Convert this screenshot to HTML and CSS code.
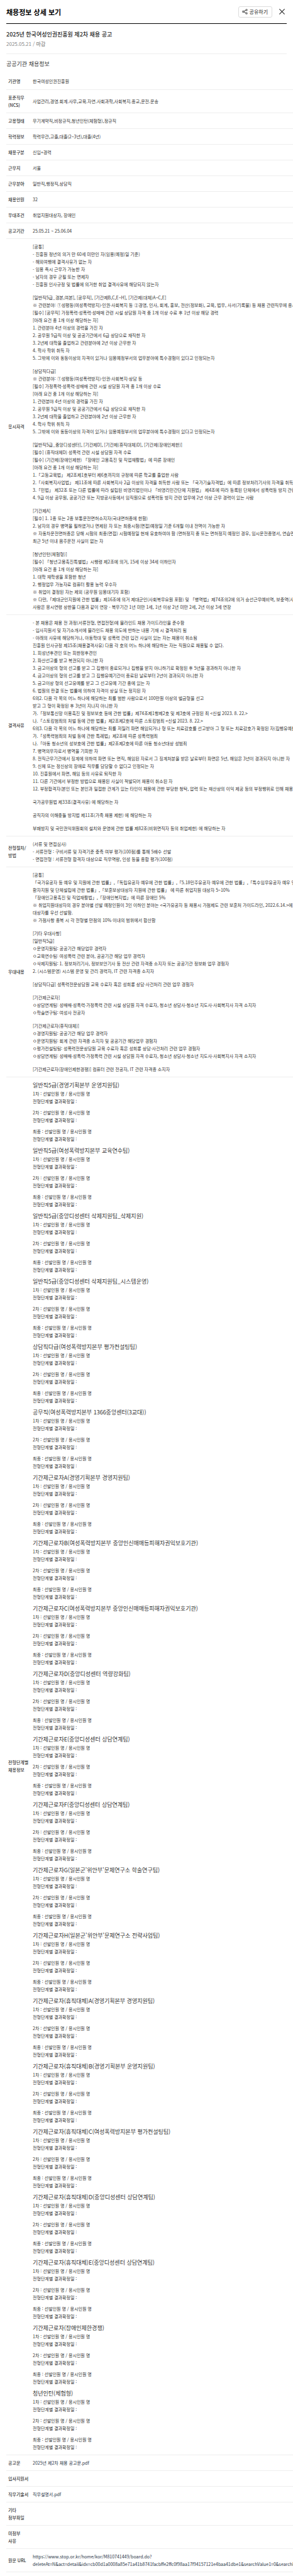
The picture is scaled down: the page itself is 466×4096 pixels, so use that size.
FILE: index.html
```html
<!DOCTYPE html>
<html lang="ko">
<head>
    <meta charset="UTF-8">
    <meta name="viewport" content="width=device-width, initial-scale=1.0">
    <title>채용정보 상세 보기</title>
    <link rel="stylesheet" href="styles.css">
</head>
<body>

    <header class="popup-header">
        <h1>채용정보 상세 보기</h1>
        <div class="popup-actions">
            <button type="button" class="btn-share">
                <svg viewBox="0 0 14 14" width="9" height="9" fill="none" stroke="#555" stroke-width="1.6">
                    <circle cx="2.8" cy="7" r="1.8"/>
                    <circle cx="11" cy="2.8" r="1.8"/>
                    <circle cx="11" cy="11.2" r="1.8"/>
                    <path d="M4.6 6.1l4.8-2.5M4.6 7.9l4.8 2.5"/>
                </svg>
                공유하기
            </button>
            <button type="button" class="btn-close" aria-label="닫기">
                <svg viewBox="0 0 14 14" width="9" height="9" fill="none" stroke="#222" stroke-width="1.6">
                    <path d="M0.5 0.5l13 13M13.5 0.5l-13 13"/>
                </svg>
            </button>
        </div>
    </header>

    <main class="popup-body">
        <div class="notice-title">
            <h2>2025년 한국여성인권진흥원 제2차 채용 공고</h2>
            <p>2025.05.21 / <strong>마감</strong></p>
        </div>

        <h3 class="section-title">공공기관 채용정보</h3>

        <div class="table-wrap">
        <table class="info-table">
            <tbody>
                <tr>
                    <th scope="row">기관명</th>
                    <td>한국여성인권진흥원</td>
                </tr>
                <tr>
                    <th scope="row">표준직무<br>(NCS)</th>
                    <td>사업관리,경영.회계.사무,교육.자연.사회과학,사회복지.종교,운전.운송</td>
                </tr>
                <tr>
                    <th scope="row">고용형태</th>
                    <td>무기계약직,비정규직,청년인턴(체험형),정규직</td>
                </tr>
                <tr>
                    <th scope="row">학력정보</th>
                    <td>학력무관,고졸,대졸(2~3년),대졸(4년)</td>
                </tr>
                <tr>
                    <th scope="row">채용구분</th>
                    <td>신입+경력</td>
                </tr>
                <tr>
                    <th scope="row">근무지</th>
                    <td>서울</td>
                </tr>
                <tr>
                    <th scope="row">근무분야</th>
                    <td>일반직,행정직,상담직</td>
                </tr>
                <tr>
                    <th scope="row">채용인원</th>
                    <td>32</td>
                </tr>
                <tr>
                    <th scope="row">우대조건</th>
                    <td>취업지원대상자, 장애인</td>
                </tr>
                <tr>
                    <th scope="row">공고기간</th>
                    <td>25.05.21 ~ 25.06.04</td>
                </tr>
                <tr>
                    <th scope="row">응시자격</th>
                    <td>
                        <p>[공통]<br>
                        - 진흥원 정년의 의거 만 60세 미만인 자(임용(예정)일 기준)<br>
                        - 해외여행에 결격사유가 없는 자<br>
                        - 임용 즉시 근무가 가능한 자<br>
                        - 남자의 경우 군필 또는 면제자<br>
                        - 진흥원 인사규정 및 법률에 의거한 취업 결격사유에 해당되지 않는자</p>
                        <p>[일반직5급_경본,여본], [공무직], [기간제B,C,E~H], [기간제(대체)A~C,E]<br>
                        ※ 관련분야: ①성평등(여성폭력방지)·인권·사회복지 등 ②경영, 인사, 회계, 홍보, 전산(정보화), 교육, 법무, 사서(기록물) 등 채용 관련직무에 종사한<br>
                        [필수] [공무직] 가정폭력·성폭력·성매매 관련 시설 상담원 자격 중 1개 이상 수료 후 1년 이상 해당 경력<br>
                        [아래 요건 중 1개 이상 해당하는 자]<br>
                        1. 관련분야 4년 이상의 경력을 가진 자<br>
                        2. 공무원 9급직 이상 및 공공기관에서 6급 상당으로 재직한 자<br>
                        3. 2년제 대학을 졸업하고 관련분야에 2년 이상 근무한 자<br>
                        4. 학사 학위 취득 자<br>
                        5. 그밖에 이와 동등이상의 자격이 있거나 임용예정부서의 업무분야에 특수경험이 있다고 인정되는자</p>
                        <p>[상담직다급]<br>
                        ※ 관련분야: ①성평등(여성폭력방지)·인권·사회복지·상담 등<br>
                        [필수] 가정폭력·성폭력·성매매 관련 시설 상담원 자격 중 1개 이상 수료<br>
                        [아래 요건 중 1개 이상 해당하는 자]<br>
                        1. 관련분야 4년 이상의 경력을 가진 자<br>
                        2. 공무원 9급직 이상 및 공공기관에서 6급 상당으로 재직한 자<br>
                        3. 2년제 대학을 졸업하고 관련분야에 2년 이상 근무한 자<br>
                        4. 학사 학위 취득 자<br>
                        5. 그밖에 이와 동등이상의 자격이 있거나 임용예정부서의 업무분야에 특수경험이 있다고 인정되는자</p>
                        <p>[일반직5급_중앙디성센터], [기간제D], [기간제(휴직대체)D], [기간제(장애인제한)]<br>
                        [필수] (휴직대체D) 성폭력 관련 시설 상담원 자격 수료<br>
                        [필수] (기간제(장애인제한) 「장애인 고용촉진 및 직업재활법」에 따른 장애인<br>
                        [아래 요건 중 1개 이상 해당하는 자]<br>
                        1.「고등교육법」 제2조제1호부터 제6호까지의 규정에 따른 학교를 졸업한 사람<br>
                        2.「사회복지사업법」 제11조에 따른 사회복지사 2급 이상의 자격을 취득한 사람 또는 「국가기술자격법」에 따른 정보처리기사의 자격을 취득한<br>
                        3.「민법」 제32조 또는 다른 법률에 따라 설립된 비영리법인이나 「비영리민간단체 지원법」 제4조에 따라 등록된 단체에서 성폭력등 방지 관련 업<br>
                        4. 9급 이상 공무원, 공공기관 또는 지방공사등에서 임직원으로 성폭력등 방지 관련 업무에 2년 이상 근무 경력이 있는 사람</p>
                        <p>[기간제A]<br>
                        [필수] 1. 1종 또는 2종 보통운전면허소지자(국내면허증에 한함)<br>
                        2. 남자의 경우 병역을 필하였거나 면제된 자 또는 최종시험(면접)예정일 기준 6개월 이내 전역이 가능한 자<br>
                        ※ 자동차운전면허증은 당해 시험의 최종(면접) 시험예정일 현재 유효하여야 함 (면허정지 중 또는 면허정지 예정인 경우, 임시운전증명서, 연습면허,<br>
                        최근 5년 이내 음주운전 사실이 없는 자</p>
                        <p>[청년인턴(체험형)]<br>
                        [필수] 「청년고용촉진특별법」시행령 제2조에 의거, 15세 이상 34세 이하인자<br>
                        [아래 요건 중 1개 이상 해당하는 자]<br>
                        1. 대학 재학생을 포함한 청년<br>
                        2. 행정업무 가능자로 컴퓨터 활용 능력 우수자<br>
                        ※ 취업이 결정된 자는 제외 (공무원 임용대기자 포함)<br>
                        ※ 다만,「제대군인지원에 관한 법률」제16조에 의거 제대군인(사회복무요원 포함) 및 「병역법」제74조의2에 의거 승선근무예비역, 보충역(사회<br>
                        사람은 응시연령 상한을 다음과 같이 연장 - 복무기간 1년 미만 1세, 1년 이상 2년 미만 2세, 2년 이상 3세 연장</p>
                    </td>
                </tr>
                <tr>
                    <th scope="row">결격사유</th>
                    <td>
                        <p>- 본 채용은 채용 전 과정(서류전형, 면접전형)에 블라인드 채용 가이드라인을 준수함<br>
                        - 입사지원서 및 자기소개서에 블라인드 채용 의도에 반하는 내용 기재 시 결격처리 됨<br>
                        - 아래의 사유에 해당하거나, 아동학대 및 성폭력 관련 입건 사실이 있는 자는 채용이 취소됨<br>
                        진흥원 인사규정 제15조(채용결격사유) 다음 각 호의 어느 하나에 해당하는 자는 직원으로 채용될 수 없다.<br>
                        1. 피성년후견인 또는 피한정후견인<br>
                        2. 파산선고를 받고 복권되지 아니한 자<br>
                        3. 금고이상의 형의 선고를 받고 그 집행이 종료되거나 집행을 받지 아니하기로 확정된 후 5년을 경과하지 아니한 자<br>
                        4. 금고이상의 형의 선고를 받고 그 집행유예기간이 종료된 날로부터 2년이 경과되지 아니한 자<br>
                        5. 금고이상 형의 선고유예를 받고 그 선고유예 기간 중에 있는 자<br>
                        6. 법원의 판결 또는 법률에 의하여 자격이 상실 또는 정지된 자<br>
                        6의2. 다음 각 목의 어느 하나에 해당하는 죄를 범한 사람으로서 100만원 이상의 벌금형을 선고<br>
                        받고 그 형이 확정된 후 3년이 지나지 아니한 자<br>
                        가.「정보통신망 이용촉진 및 정보보호 등에 관한 법률」제74조제1항제2호 및 제3호에 규정된 죄 &lt;신설 2023. 8. 22.&gt;<br>
                        나.「스토킹범죄의 처벌 등에 관한 법률」제2조제2호에 따른 스토킹범죄 &lt;신설 2023. 8. 22.&gt;<br>
                        6의3. 다음 각 목의 어느 하나에 해당하는 죄를 저질러 파면 해임되거나 형 또는 치료감호를 선고받아 그 형 또는 치료감호가 확정된 자(집행유예를 선고<br>
                        가.「성폭력범죄의 처벌 등에 관한 특례법」제2조에 따른 성폭력범죄<br>
                        나.「아동 청소년의 성보호에 관한 법률」제2조제2호에 따른 아동 청소년대상 성범죄<br>
                        7. 병역의무자로서 병역을 기피한 자<br>
                        8. 전직근무기관에서 징계에 의하여 파면 또는 면직, 해임된 자로서 그 징계처분을 받은 날로부터 파면은 5년, 해임은 3년이 경과되지 아니한 자<br>
                        9. 신체 또는 정신상의 장애로 직무를 담당할 수 없다고 인정되는 자<br>
                        10. 진흥원에서 파면, 해임 등의 사유로 퇴직한 자<br>
                        11. 다른 기관에서 부정한 방법으로 채용된 사실이 적발되어 채용이 취소된 자<br>
                        12. 부정합격자(본인 또는 본인과 밀접한 관계가 있는 타인이 채용에 관한 부당한 청탁, 압력 또는 재산상의 이익 제공 등의 부정행위로 인해 채용에 합격</p>
                        <p>국가공무원법 제33조(결격사유) 에 해당하는 자</p>
                        <p>공직자의 이해충돌 방지법 제11조(가족 채용 제한) 에 해당하는 자</p>
                        <p>부패방지 및 국민권익위원회의 설치와 운영에 관한 법률 제82조(비위면직자 등의 취업제한) 에 해당하는 자</p>
                    </td>
                </tr>
                <tr>
                    <th scope="row">전형절차/<br>방법</th>
                    <td>
                        <p>(서류 및 면접심사)<br>
                        - 서류전형 : 구비서류 및 자격기준 충족 여부 평가(100점)를 통해 5배수 선발<br>
                        - 면접전형 : 서류전형 합격자 대상으로 직무역량, 인성 등을 종합 평가(100점)</p>
                    </td>
                </tr>
                <tr>
                    <th scope="row">우대내용</th>
                    <td>
                        <p>[공통]<br>
                        「국가유공자 등 예우 및 지원에 관한 법률」,「독립유공자 예우에 관한 법률」,「5.18민주유공자 예우에 관한 법률」,「특수임무유공자 예우 및 단<br>
                        환자지원 및 단체설립에 관한 법률」,「보훈보상대상자 지원에 관한 법률」 에 따른 취업지원 대상자 5~10%<br>
                        「장애인고용촉진 및 직업재활법」,「장애인복지법」에 따른 장애인 5%<br>
                        ※ 취업지원대상자의 경우 분야별 선발 예정인원이 3인 이하인 분야는 &lt;국가유공자 등 채용시 가점제도 관련 보훈처 가이드라인, 2022.6.14.&gt;에 따라<br>
                        대상자를 우선 선발함.<br>
                        ※ 가점사항 중복 시 각 전형별 만점의 10% 이내의 범위에서 합산함</p>
                        <p>[기타 우대사항]<br>
                        [일반직5급]<br>
                        ㅇ운영지원팀: 공공기관 해당업무 경력자<br>
                        ㅇ교육연수팀: 여성폭력 관련 분야, 공공기관 해당 업무 경력자<br>
                        ㅇ삭제지원팀: 1. 정보처리기사, 정보보안기사 등 전산 관련 자격증 소지자 또는 공공기관 정보화 업무 경험자<br>
                        2. (시스템운영) 시스템 운영 및 관리 경력자, IT 관련 자격증 소지자</p>
                        <p>[상담직다급] 성폭력전문상담원 교육 수료자 혹은 성희롱 상담·사건처리 관련 업무 경험자</p>
                        <p>[기간제근로자]<br>
                        ㅇ상담연계팀: 성매매·성폭력·가정폭력 관련 시설 상담원 자격 수료자, 청소년 상담사·청소년 지도사·사회복지사 자격 소지자<br>
                        ㅇ학술연구팀: 여성사 전공자</p>
                        <p>[기간제근로자(휴직대체)]<br>
                        ㅇ경영지원팀: 공공기관 해당 업무 경력자<br>
                        ㅇ운영지원팀: 회계 관련 자격증 소지자 및 공공기관 해당업무 경험자<br>
                        ㅇ평가컨설팅팀: 성폭력전문상담원 교육 수료자 혹은 성희롱 상담·사건처리 관련 업무 경험자<br>
                        ㅇ상담연계팀: 성매매·성폭력·가정폭력 관련 시설 상담원 자격 수료자, 청소년 상담사·청소년 지도사·사회복지사 자격 소지자</p>
                        <p>[기간제근로자(장애인제한경쟁)] 컴퓨터 관련 전공자, IT 관련 자격증 소지자</p>
                    </td>
                </tr>
                <tr>
                    <th scope="row">전형단계별<br>채용정보</th>
                    <td id="stages" class="stages"></td>
                </tr>
                <tr>
                    <th scope="row">공고문</th>
                    <td><a href="#">2025년 제2차 채용 공고문.pdf</a></td>
                </tr>
                <tr>
                    <th scope="row">입사지원서</th>
                    <td></td>
                </tr>
                <tr>
                    <th scope="row">직무기술서</th>
                    <td><a href="#">직무설명서.pdf</a></td>
                </tr>
                <tr>
                    <th scope="row">기타<br>첨부파일</th>
                    <td></td>
                </tr>
                <tr>
                    <th scope="row">미첨부<br>사유</th>
                    <td></td>
                </tr>
                <tr>
                    <th scope="row">원문 URL</th>
                    <td><a href="#">https://www.stop.or.kr/home/kor/M810741449/board.do?<br>deleteAt=N&amp;act=detail&amp;idx=cb00d1a0008a85e71a41b8741facbffe2ffc0f98aa17f94157121e4baa41dbe1&amp;searchValue1=0&amp;searchKeyword</a></td>
                </tr>
            </tbody>
        </table>
        </div>
    </main>

    <script src="script.js"></script>
</body>
</html>
```

FILE: styles.css
```css
* {
    box-sizing: border-box;
    margin: 0;
    padding: 0;
}

body {
    background: #fff;
    color: #333;
    font-family: "Noto Sans CJK KR", sans-serif;
    font-size: 7px;
    line-height: 12px;
    padding: 0 10px 13px;
}

button {
    font-family: inherit;
    background: none;
    border: none;
    cursor: pointer;
}

a {
    color: #2b3648;
    text-decoration: none;
}

.popup-header {
    display: flex;
    justify-content: space-between;
    align-items: center;
    height: 38px;
    border-bottom: 1px solid #000;
}

.popup-header h1 {
    font-size: 11px;
    font-weight: 700;
    line-height: 16px;
    color: #000;
}

.popup-actions {
    display: flex;
    align-items: center;
    gap: 8px;
}

.btn-share {
    display: flex;
    align-items: center;
    gap: 3px;
    height: 18px;
    padding: 0 6px 0 5px;
    border: 1px solid #ddd;
    border-radius: 3px;
    font-size: 8px;
    color: #222;
}

.btn-close {
    display: flex;
    padding: 3px;
}

.notice-title {
    padding: 9px 0 8px;
    border-bottom: 1px solid #eee;
}

.notice-title h2 {
    font-size: 9px;
    font-weight: 500;
    line-height: 16px;
    color: #222;
}

.notice-title p {
    font-size: 8px;
    line-height: 14px;
    color: #888;
}

.notice-title strong {
    font-weight: 500;
}

.section-title {
    padding: 8px 0 7px;
    font-size: 9px;
    font-weight: 400;
    line-height: 16px;
}

/* the table runs to the right edge of the popup */
.table-wrap {
    margin-right: -10px;
    overflow: hidden;
}

.info-table {
    width: 100%;
    border-collapse: collapse;
    white-space: nowrap;
}

.info-table th,
.info-table td {
    padding: 6px 0 6px 3px;
    border-bottom: 1px solid #eee;
    text-align: left;
    vertical-align: middle;
}

.info-table tr {
    height: 25px;
}

.info-table th {
    width: 39px;
    min-width: 39px;
    font-weight: 500;
}

.info-table p + p {
    margin-top: 9px;
}

.stages h4 {
    font-size: 9px;
    font-weight: 400;
    line-height: 14px;
}

.stages .stage + .stage {
    margin-top: 6px;
}

.stages .stage p + p {
    margin-top: 6px;
}
```

FILE: script.js
```js
const positions = [
    "일반직5급(경영기획본부 운영지원팀)",
    "일반직5급(여성폭력방지본부 교육연수팀)",
    "일반직5급(중앙디성센터 삭제지원팀_삭제지원)",
    "일반직5급(중앙디성센터 삭제지원팀_시스템운영)",
    "상담직다급(여성폭력방지본부 평가컨설팅팀)",
    "공무직(여성폭력방지본부 1366중앙센터(3교대))",
    "기간제근로자A(경영기획본부 경영지원팀)",
    "기간제근로자B(여성폭력방지본부 중앙인신매매등피해자권익보호기관)",
    "기간제근로자C(여성폭력방지본부 중앙인신매매등피해자권익보호기관)",
    "기간제근로자D(중앙디성센터 역량강화팀)",
    "기간제근로자E(중앙디성센터 상담연계팀)",
    "기간제근로자F(중앙디성센터 상담연계팀)",
    "기간제근로자G(일본군'위안부'문제연구소 학술연구팀)",
    "기간제근로자H(일본군'위안부'문제연구소 전략사업팀)",
    "기간제근로자(휴직대체)A(경영기획본부 경영지원팀)",
    "기간제근로자(휴직대체)B(경영기획본부 운영지원팀)",
    "기간제근로자(휴직대체)C(여성폭력방지본부 평가컨설팅팀)",
    "기간제근로자(휴직대체)D(중앙디성센터 상담연계팀)",
    "기간제근로자(휴직대체)E(중앙디성센터 상담연계팀)",
    "기간제근로자(장애인제한경쟁)",
    "청년인턴(체험형)"
];
const steps = ["1차", "2차", "최종"];

document.getElementById("stages").innerHTML = positions.map(name => `
    <div class="stage">
        <h4>${name}</h4>
        ${steps.map(step => `<p>${step} : 선발인원 명 / 응시인원 명<br>전형단계별 결과확정일 :</p>`).join("")}
    </div>`).join("");
```
